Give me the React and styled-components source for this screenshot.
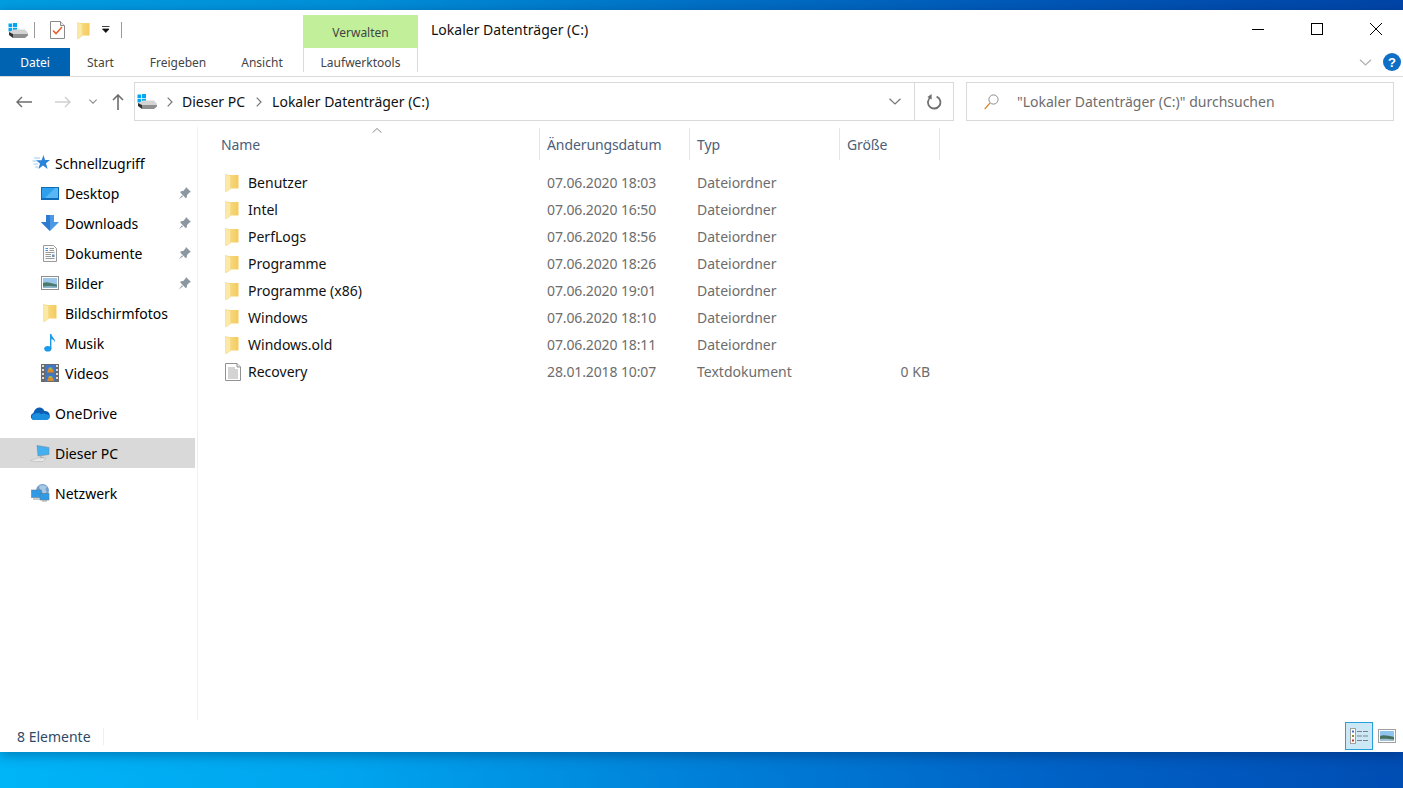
import styled, { createGlobalStyle } from 'styled-components';

const GlobalStyle = createGlobalStyle`
  html, body { margin: 0; padding: 0; height: 100%; }
  body { font-family: "Noto Sans", "Open Sans", sans-serif; font-size: 14px; overflow: hidden; }
`

const FolderIcon = ({ w = 14, h = 18 }) => (
  <svg width={w} height={h} viewBox="0 0 14 18">
    <defs>
      <linearGradient id="folderBack" x1="0" y1="0" x2="1" y2="0">
        <stop offset="0" stopColor="#f9dc84" />
        <stop offset="1" stopColor="#f3cb5e" />
      </linearGradient>
    </defs>
    <path d="M3 1H13.5V14.5H3z" fill="url(#folderBack)" />
    <path d="M0.4 0.3L5.6 2V14.8L1.4 17.8H0.4z" fill="#fde9a6" stroke="#f1d27c" strokeWidth="0.5" />
  </svg>
)

const DriveIcon = () => (
  <svg width="20" height="15" viewBox="0 0 20 15">
    <path d="M0.5 0.5H4.2V4.2H0.5zM5 0H9V4.2H5zM0.5 5H4.2V8.6H0.5zM5 5H9V9H5z" fill="#00a6f2" />
    <path d="M1 9L6 6.5H17L20 10V11.5H5z" fill="#d4d4d4" />
    <path d="M1 9L5 11V15L1 12z" fill="#303030" />
    <path d="M5 11H20V12.5L17 15H5z" fill="#8f8f8f" />
  </svg>
)

const CheckDocIcon = () => (
  <svg width="15" height="18" viewBox="0 0 15 18">
    <path d="M0.5 0.5H10.5L14.5 4.5V17.5H0.5z" fill="#fff" stroke="#8a8a8a" />
    <path d="M10.5 0.5V4.5H14.5" fill="#eee" stroke="#8a8a8a" />
    <path d="M3 9.5L6 12.5L12 6" fill="none" stroke="#e8602c" strokeWidth="1.6" />
  </svg>
)

const QatArrow = () => (
  <svg width="8" height="8" viewBox="0 0 8 8">
    <path d="M0 0.5H7.5M0.5 3H7L3.8 6.5z" fill="#111" stroke="#111" strokeWidth="0.8" />
  </svg>
)

const MinimizeIcon = () => (
  <svg width="12" height="12" viewBox="0 0 12 12"><path d="M0 6.5H12" stroke="#000" fill="none" /></svg>
)
const MaximizeIcon = () => (
  <svg width="12" height="12" viewBox="0 0 12 12"><rect x="0.5" y="0.5" width="11" height="11" stroke="#000" fill="none" /></svg>
)
const CloseIcon = () => (
  <svg width="12" height="12" viewBox="0 0 12 12"><path d="M0 0L12 12M12 0L0 12" stroke="#000" fill="none" /></svg>
)

const Chevron = ({ w = 12, h = 7, color = '#767676', sw = 1.2 }) => (
  <svg width={w} height={h} viewBox="0 0 12 7">
    <path d="M0.5 0.7L6 6L11.5 0.7" stroke={color} strokeWidth={sw} fill="none" />
  </svg>
)

const HelpIcon = () => (
  <svg width="18" height="18" viewBox="0 0 18 18">
    <circle cx="9" cy="9" r="9" fill="#0f6fc6" />
    <text x="9" y="14" textAnchor="middle" fontSize="13" fontWeight="700" fill="#fff" fontFamily="Liberation Sans, sans-serif">?</text>
  </svg>
)

const BackArrow = ({ color }) => (
  <svg width="16" height="12" viewBox="0 0 16 12">
    <path d="M16 6H1M6 1L1 6L6 11" stroke={color} strokeWidth="1.4" fill="none" />
  </svg>
)
const ForwardArrow = ({ color }) => (
  <svg width="16" height="12" viewBox="0 0 16 12">
    <path d="M0 6H15M10 1L15 6L10 11" stroke={color} strokeWidth="1.4" fill="none" />
  </svg>
)
const UpArrow = () => (
  <svg width="12" height="16" viewBox="0 0 12 16">
    <path d="M6 16V1M1 6L6 1L11 6" stroke="#6d6d6d" strokeWidth="1.6" fill="none" />
  </svg>
)
const SmallRight = () => (
  <svg width="6" height="10" viewBox="0 0 6 10">
    <path d="M0.7 0.7L5 5L0.7 9.3" stroke="#767676" strokeWidth="1.2" fill="none" />
  </svg>
)
const RefreshIcon = () => (
  <svg width="15" height="16" viewBox="0 0 15 16">
    <path d="M9.6 2.6A6.2 6.2 0 1 1 4 3" stroke="#707070" strokeWidth="1.8" fill="none" />
    <path d="M4.6 0L4.6 5.6L0.4 3z" fill="#707070" />
  </svg>
)
const SearchIcon = () => (
  <svg width="15" height="16" viewBox="0 0 15 16">
    <circle cx="9.5" cy="5.5" r="4.6" stroke="#8c8c8c" strokeWidth="1" fill="none" />
    <path d="M6 9L0.7 15" stroke="#d08a3a" strokeWidth="1.2" fill="none" />
  </svg>
)
const SortCaret = () => (
  <svg width="10" height="5" viewBox="0 0 10 5">
    <path d="M0.5 4.7L5 0.5L9.5 4.7" stroke="#8a8a8a" fill="none" />
  </svg>
)

const StarIcon = () => (
  <svg width="18" height="16" viewBox="0 0 18 16">
    <path d="M11.5 0L13 5H18L14 8.2L15.6 14L11 10.6L6.4 14L8 8.4L4 5.2H9.6z" fill="#2b82d9" />
    <path d="M2 3H8M0.5 6H5M1.5 9H6M3 12H6.5" stroke="#8cc4f0" strokeWidth="0.9" />
  </svg>
)
const DesktopIcon = () => (
  <svg width="18" height="13" viewBox="0 0 18 13">
    <rect x="0" y="0" width="18" height="13" fill="#0f6cb8" />
    <rect x="1" y="1" width="16" height="10" fill="#2da0ee" />
    <path d="M4 11L14 1H17V11z" fill="#57b8f5" />
  </svg>
)
const DownloadIcon = () => (
  <svg width="18" height="16" viewBox="0 0 18 16">
    <path d="M5 0H13V7H18L9 16L0 7H5z" fill="#4a98e6" />
    <path d="M5 0H9V16L0 7H5z" fill="#2f7bd0" />
  </svg>
)
const DocumentIcon = () => (
  <svg width="14" height="17" viewBox="0 0 14 17">
    <path d="M0.5 0.5H10.5L13.5 3.5V16.5H0.5z" fill="#fbfbfb" stroke="#9a9a9a" />
    <path d="M2.5 3.5H5M2.5 5.5H5" stroke="#3a8fdc" />
    <path d="M6.5 3.5H11M6.5 5.5H11M2.5 7.5H11.5M2.5 9.5H8M2.5 11.5H8M2.5 13.5H11.5" stroke="#9a9a9a" />
    <rect x="9" y="9.5" width="2.5" height="2.5" fill="#6b92b5" />
  </svg>
)
const PictureIcon = () => (
  <svg width="18" height="14" viewBox="0 0 18 14">
    <rect x="0.5" y="0.5" width="17" height="13" fill="#fff" stroke="#8f8f8f" />
    <rect x="2" y="2" width="14" height="10" fill="#9cc7ea" />
    <path d="M2 7C6 5 9 7 16 8.5V12H2z" fill="#4c7a6b" />
    <path d="M2 10.5C7 9.5 11 10 16 10.5V12H2z" fill="#8fb6cc" />
  </svg>
)
const MusicIcon = () => (
  <svg width="12" height="18" viewBox="0 0 12 18">
    <ellipse cx="3.8" cy="14.8" rx="3.6" ry="2.8" fill="#1b9bea" />
    <path d="M6 15V0H7.4C7.6 3 11.5 4.5 11 8.5C10.6 6.5 9 5.5 7.4 5V15z" fill="#1b9bea" />
  </svg>
)
const VideoIcon = () => (
  <svg width="18" height="18" viewBox="0 0 18 18">
    <rect width="18" height="18" fill="#6a6a6a" />
    <path d="M1 1h2v2H1zM1 5h2v2H1zM1 9h2v2H1zM1 13h2v2H1zM15 1h2v2h-2zM15 5h2v2h-2zM15 9h2v2h-2zM15 13h2v2h-2z" fill="#dcdcdc" />
    <rect x="4" y="1" width="10" height="7.5" fill="#3f78c8" />
    <rect x="4" y="9.5" width="10" height="7.5" fill="#3f78c8" />
    <path d="M6 8.5L8 3.5L12 5L13 8.5zM6 17L8 12L12 13.5L13 17z" fill="#d88a2c" />
    <path d="M8 3.5h3v2H8zM8 12h3v2H8z" fill="#8fbf3c" />
  </svg>
)
const CloudIcon = () => (
  <svg width="20" height="13" viewBox="0 0 20 13">
    <path d="M4 13A3.6 3.6 0 0 1 3.4 6C4.5 3 6 1 9 0.6C11.5 0.3 13.4 1.5 14.4 4A4 4 0 0 1 16 13z" fill="#0a5fb4" />
    <path d="M4 13A3.2 3.2 0 0 1 4.6 6.8C7 5.4 9.5 5.8 11 7.2C13.5 6 17 6.6 20 9.5C20 11.5 18.5 13 16 13z" fill="#1a8fe0" />
  </svg>
)
const PcIcon = () => (
  <svg width="20" height="17" viewBox="0 0 20 17">
    <path d="M7 0.5L19 2.5V9.5L8 11z" fill="#45b0f0" stroke="#6b8ea8" strokeWidth="0.6" />
    <path d="M11 11V13H14" stroke="#a0a0a0" fill="none" />
    <path d="M0.5 15.5L8 13H16L13 16.5H3z" fill="#e8e8e8" stroke="#b8b8b8" strokeWidth="0.6" />
  </svg>
)
const NetworkIcon = () => (
  <svg width="19" height="18" viewBox="0 0 19 18">
    <circle cx="11.5" cy="6.5" r="6.5" fill="#6f9fcb" />
    <path d="M8 2C10 1 14 1 16 3C14 4 14 6 16 8L13 10C11 8 9 7 8 2z" fill="#a9c8e2" />
    <rect x="0.5" y="6" width="10" height="7.5" fill="#2f9be6" stroke="#5e7d98" strokeWidth="0.6" />
    <rect x="9" y="9.5" width="9" height="6.5" fill="#2f9be6" stroke="#5e7d98" strokeWidth="0.6" />
    <path d="M2 15H9M11 17H16" stroke="#9a9a9a" />
  </svg>
)
const PinIcon = () => (
  <svg width="13" height="13" viewBox="0 0 13 13">
    <path d="M8 0L13 5L11.5 5.5L9 8L8.8 10.5L7.5 11L2.3 5.6L2.8 4.2L5.2 4L7.5 1.5zM4 8.2L5 9.2L0.7 12.6z" fill="#8c96a0" />
  </svg>
)
const TextFileIcon = () => (
  <svg width="16" height="18" viewBox="0 0 16 18">
    <path d="M0.5 0.5H12L15.5 4V17.5H0.5z" fill="#fff" stroke="#929292" />
    <path d="M12 0.5V4H15.5" fill="#e6e6e6" stroke="#929292" />
    <path d="M3 5H10M3 7H13M3 9H13M3 11H13M3 13H13M3 15H13" stroke="#a8a8a8" />
  </svg>
)
const DetailsViewIcon = () => (
  <svg width="19" height="16" viewBox="0 0 19 16">
    <rect x="0.5" y="0.5" width="5" height="15" fill="#fff" stroke="#a0a0a0" />
    <rect x="2" y="2.5" width="2" height="2" fill="#3c78b8" />
    <rect x="2" y="7" width="2" height="2" fill="#8a8a2c" />
    <rect x="2" y="11.5" width="2" height="2" fill="#c03a20" />
    <path d="M7 3.5H12M13 3.5H18M7 8H12M13 8H18M7 12.5H12M13 12.5H18" stroke="#808080" />
  </svg>
)
const LargeViewIcon = () => (
  <svg width="18" height="14" viewBox="0 0 18 14">
    <rect x="0.5" y="0.5" width="17" height="13" fill="#fff" stroke="#a0a0a0" />
    <rect x="2" y="2" width="14" height="10" fill="#8fc4ee" />
    <path d="M2 7C6 5.5 10 7 16 8V12H2z" fill="#47705f" />
    <path d="M2 10C7 9.5 11 10 16 10.5V12H2z" fill="#9fc2d4" />
  </svg>
)

const tabs = [
  { label: 'Start', width: 61 },
  { label: 'Freigeben', width: 94 },
  { label: 'Ansicht', width: 74 },
]

const quickItems = [
  { label: 'Desktop', icon: <DesktopIcon />, pinned: true },
  { label: 'Downloads', icon: <DownloadIcon />, pinned: true },
  { label: 'Dokumente', icon: <DocumentIcon />, pinned: true },
  { label: 'Bilder', icon: <PictureIcon />, pinned: true },
  { label: 'Bildschirmfotos', icon: <FolderIcon /> },
  { label: 'Musik', icon: <MusicIcon /> },
  { label: 'Videos', icon: <VideoIcon /> },
]

const files = [
  { name: 'Benutzer', date: '07.06.2020 18:03', type: 'Dateiordner' },
  { name: 'Intel', date: '07.06.2020 16:50', type: 'Dateiordner' },
  { name: 'PerfLogs', date: '07.06.2020 18:56', type: 'Dateiordner' },
  { name: 'Programme', date: '07.06.2020 18:26', type: 'Dateiordner' },
  { name: 'Programme (x86)', date: '07.06.2020 19:01', type: 'Dateiordner' },
  { name: 'Windows', date: '07.06.2020 18:10', type: 'Dateiordner' },
  { name: 'Windows.old', date: '07.06.2020 18:11', type: 'Dateiordner' },
  { name: 'Recovery', date: '28.01.2018 10:07', type: 'Textdokument', size: '0 KB', isFile: true },
]

const App = () => {
  return (
    <Desktop>
      <GlobalStyle />
      <Explorer>
        <TitleBar>
          <QuickAccess>
            <DriveIcon />
            <QatSep $left={-6} $right={3} />
            <CheckDocIcon />
            <FolderIcon w={13} h={17} />
            <QatArrow />
            <QatSep $left={-1} $right={0} />
          </QuickAccess>
          <ContextHead>Verwalten</ContextHead>
          <WindowTitle>Lokaler Datenträger (C:)</WindowTitle>
          <WindowControls>
            <WinButton><MinimizeIcon /></WinButton>
            <WinButton><MaximizeIcon /></WinButton>
            <WinButton><CloseIcon /></WinButton>
          </WindowControls>
        </TitleBar>

        <TabRow>
          <FileTab>Datei</FileTab>
          {tabs.map(t => <Tab key={t.label} $width={t.width}>{t.label}</Tab>)}
          <ContextTab>Laufwerktools</ContextTab>
          <RibbonHelp>
            <Chevron w={13} h={7} color="#b0b0b0" />
            <HelpIcon />
          </RibbonHelp>
        </TabRow>

        <AddressRow>
          <NavButtons>
            <BackArrow color="#6d6d6d" />
            <ForwardGap><ForwardArrow color="#cfcfcf" /></ForwardGap>
            <Chevron w={8} h={5} color="#8a8a8a" sw={1.6} />
            <UpGap><UpArrow /></UpGap>
          </NavButtons>
          <AddressBox>
            <Crumbs>
              <DriveIcon />
              <CrumbArrow $width={25}><SmallRight /></CrumbArrow>
              <span>Dieser PC</span>
              <CrumbArrow $width={27}><SmallRight /></CrumbArrow>
              <span>Lokaler Datenträger (C:)</span>
            </Crumbs>
            <AddressDrop><Chevron /></AddressDrop>
            <RefreshButton><RefreshIcon /></RefreshButton>
          </AddressBox>
          <SearchBox>
            <SearchIcon />
            <SearchText>"Lokaler Datenträger (C:)" durchsuchen</SearchText>
          </SearchBox>
        </AddressRow>

        <Main>
          <Sidebar>
            <NavGroup>
              <NavHead><HeadIcon><StarIcon /></HeadIcon><span>Schnellzugriff</span></NavHead>
              {quickItems.map(item => (
                <NavItem key={item.label}>
                  <NavIcon>{item.icon}</NavIcon>
                  <span>{item.label}</span>
                  {item.pinned && <Pin><PinIcon /></Pin>}
                </NavItem>
              ))}
            </NavGroup>
            <NavGroup>
              <NavHead><HeadIcon><CloudIcon /></HeadIcon><span>OneDrive</span></NavHead>
            </NavGroup>
            <NavGroup>
              <NavHead $active><HeadIcon><PcIcon /></HeadIcon><span>Dieser PC</span></NavHead>
            </NavGroup>
            <NavGroup>
              <NavHead><HeadIcon><NetworkIcon /></HeadIcon><span>Netzwerk</span></NavHead>
            </NavGroup>
          </Sidebar>

          <FileArea>
            <ColumnHeader>
              <SortMark><SortCaret /></SortMark>
              <HeadCell>Name</HeadCell>
              <HeadCell>Änderungsdatum</HeadCell>
              <HeadCell>Typ</HeadCell>
              <HeadCell>Größe</HeadCell>
            </ColumnHeader>
            <FileList>
              {files.map(f => (
                <FileRow key={f.name}>
                  <NameCell>
                    <FileIcon>{f.isFile ? <TextFileIcon /> : <FolderIcon />}</FileIcon>
                    {f.name}
                  </NameCell>
                  <DateCell>{f.date}</DateCell>
                  <MetaCell>{f.type}</MetaCell>
                  <SizeCell>{f.size}</SizeCell>
                </FileRow>
              ))}
            </FileList>
          </FileArea>
        </Main>

        <StatusBar>
          <StatusText>8 Elemente</StatusText>
          <ViewButtons>
            <ViewButton $active><DetailsViewIcon /></ViewButton>
            <ViewButton><LargeViewIcon /></ViewButton>
          </ViewButtons>
        </StatusBar>
      </Explorer>
    </Desktop>
  );
}

export default App;

const Desktop = styled.div`
  height: 100vh;
  box-sizing: border-box;
  padding: 10px 0 36px;
  background:
    linear-gradient(180deg, rgba(0, 20, 90, 0.14) 0, rgba(0, 20, 90, 0.14) 10px, transparent 10px),
    linear-gradient(90deg, #00b4f8 0%, #00a4ee 25%, #0080d8 50%, #0062c6 75%, #004db4 100%);
  display: flex;
  flex-direction: column;
`
const Explorer = styled.div`
  flex: 1;
  display: flex;
  flex-direction: column;
  background: #fff;
  color: #000;
  box-shadow: 0 3px 12px rgba(0, 20, 60, 0.35);
`
const TitleBar = styled.div`
  height: 38px;
  display: flex;
  flex-shrink: 0;
`
const QuickAccess = styled.div`
  width: 303px;
  box-sizing: border-box;
  padding: 2px 0 0 8px;
  display: flex;
  align-items: center;
  gap: 12px;
`
const QatSep = styled.div`
  width: 1px;
  height: 16px;
  background: #9a9a9a;
  margin: 0 ${p => p.$right}px 0 ${p => p.$left}px;
`
const ContextHead = styled.div`
  width: 115px;
  margin-top: 5px;
  background: #c2f09a;
  color: #444;
  font-size: 12px;
  display: flex;
  align-items: center;
  justify-content: center;
  padding-top: 2px;
  box-sizing: border-box;
`
const WindowTitle = styled.div`
  margin-left: 13px;
  padding-top: 10px;
  font-size: 14px;
  color: #111;
`
const WindowControls = styled.div`
  margin-left: auto;
  display: flex;
`
const WinButton = styled.div`
  width: 59px;
  box-sizing: border-box;
  padding-right: 21px;
  display: flex;
  align-items: center;
  justify-content: flex-end;
`
const TabRow = styled.div`
  height: 29px;
  flex-shrink: 0;
  box-sizing: border-box;
  display: flex;
  border-bottom: 1px solid #dadada;
  font-size: 12px;
  color: #444;
`
const FileTab = styled.div`
  width: 70px;
  height: 28px;
  background: #0063b1;
  color: #fff;
  display: flex;
  align-items: center;
  justify-content: center;
`
const Tab = styled.div`
  width: ${p => p.$width}px;
  display: flex;
  align-items: center;
  justify-content: center;
`
const ContextTab = styled.div`
  width: 115px;
  height: 24px;
  margin-left: 4px;
  padding-top: 5px;
  box-sizing: border-box;
  border-left: 1px solid #dadada;
  border-right: 1px solid #dadada;
  display: flex;
  align-items: center;
  justify-content: center;
`
const RibbonHelp = styled.div`
  margin-left: auto;
  padding-right: 2px;
  display: flex;
  align-items: center;
  gap: 11px;
`
const AddressRow = styled.div`
  height: 50px;
  flex-shrink: 0;
  box-sizing: border-box;
  padding: 5px 9px 6px 16px;
  display: flex;
`
const NavButtons = styled.div`
  width: 118px;
  display: flex;
  align-items: center;
`
const ForwardGap = styled.div`
  margin: 0 18px 0 23px;
  display: flex;
`
const UpGap = styled.div`
  margin-left: 15px;
  display: flex;
`
const AddressBox = styled.div`
  width: 820px;
  box-sizing: border-box;
  border: 1px solid #d9d9d9;
  display: flex;
  align-items: stretch;
`
const Crumbs = styled.div`
  flex: 1;
  display: flex;
  align-items: center;
  padding-left: 2px;
  color: #111;
`
const CrumbArrow = styled.div`
  width: ${p => p.$width}px;
  display: flex;
  justify-content: center;
`
const AddressDrop = styled.div`
  width: 38px;
  display: flex;
  align-items: center;
  justify-content: center;
`
const RefreshButton = styled.div`
  width: 38px;
  border-left: 1px solid #d9d9d9;
  display: flex;
  align-items: center;
  justify-content: center;
`
const SearchBox = styled.div`
  margin-left: 12px;
  flex: 1;
  box-sizing: border-box;
  border: 1px solid #d9d9d9;
  display: flex;
  align-items: center;
  padding-left: 17px;
`
const SearchText = styled.span`
  margin-left: 18px;
  color: #6d6d6d;
`
const Main = styled.div`
  flex: 1;
  display: flex;
  min-height: 0;
`
const Sidebar = styled.div`
  width: 198px;
  box-sizing: border-box;
  padding: 21px 2px 0 0;
  border-right: 1px solid #f0f0f0;
  display: flex;
  flex-direction: column;
  gap: 10px;
`
const NavGroup = styled.div`
  display: flex;
  flex-direction: column;
`
const NavHead = styled.div`
  height: 30px;
  display: flex;
  align-items: center;
  gap: 5px;
  padding-left: 30px;
  background: ${p => (p.$active ? '#d9d9d9' : 'transparent')};
`
const HeadIcon = styled.div`
  width: 20px;
  display: flex;
  justify-content: flex-end;
`
const NavItem = styled.div`
  height: 30px;
  display: flex;
  align-items: center;
  padding-left: 40px;
`
const NavIcon = styled.div`
  width: 19px;
  margin-right: 6px;
  display: flex;
  justify-content: center;
`
const Pin = styled.div`
  margin-left: auto;
  margin-right: 4px;
  display: flex;
`
const FileArea = styled.div`
  flex: 1;
  padding-left: 16px;
`
const ColumnHeader = styled.div`
  height: 33px;
  display: grid;
  grid-template-columns: 326px 150px 150px 100px;
  position: relative;
  width: max-content;
  color: #4c607a;
`
const SortMark = styled.div`
  position: absolute;
  left: 158px;
  top: 1px;
  display: flex;
`
const HeadCell = styled.div`
  border-right: 1px solid #e5e5e5;
  padding: 7px 0 0 7px;
  box-sizing: border-box;
  margin-top: 1px;
  letter-spacing: -0.1px;
`
const FileList = styled.div`
  margin-top: 9px;
`
const FileRow = styled.div`
  height: 27px;
  display: grid;
  grid-template-columns: 326px 150px 150px 90px;
  align-items: center;
  width: max-content;
`
const NameCell = styled.div`
  display: flex;
  align-items: center;
  padding-left: 11px;
  color: #111;
`
const FileIcon = styled.div`
  width: 23px;
  display: flex;
`
const MetaCell = styled.div`
  padding-left: 7px;
  color: #6d6d6d;
`
const DateCell = styled(MetaCell)`
  letter-spacing: -0.12px;
`
const SizeCell = styled.div`
  text-align: right;
  color: #6d6d6d;
`
const StatusBar = styled.div`
  height: 32px;
  flex-shrink: 0;
  display: flex;
  align-items: center;
`
const StatusText = styled.div`
  padding: 0 12px 0 17px;
  border-right: 1px solid #eeeeee;
  color: #2f4a68;
  height: 17px;
  line-height: 17px;
`
const ViewButtons = styled.div`
  margin-left: auto;
  margin-right: 7px;
  display: flex;
  align-items: center;
  gap: 4px;
`
const ViewButton = styled.div`
  width: ${p => (p.$active ? '28px' : '19px')};
  height: 28px;
  box-sizing: border-box;
  display: flex;
  align-items: center;
  justify-content: center;
  background: ${p => (p.$active ? '#cce8f6' : 'transparent')};
  border: ${p => (p.$active ? '1px solid #26a0da' : 'none')};
`
